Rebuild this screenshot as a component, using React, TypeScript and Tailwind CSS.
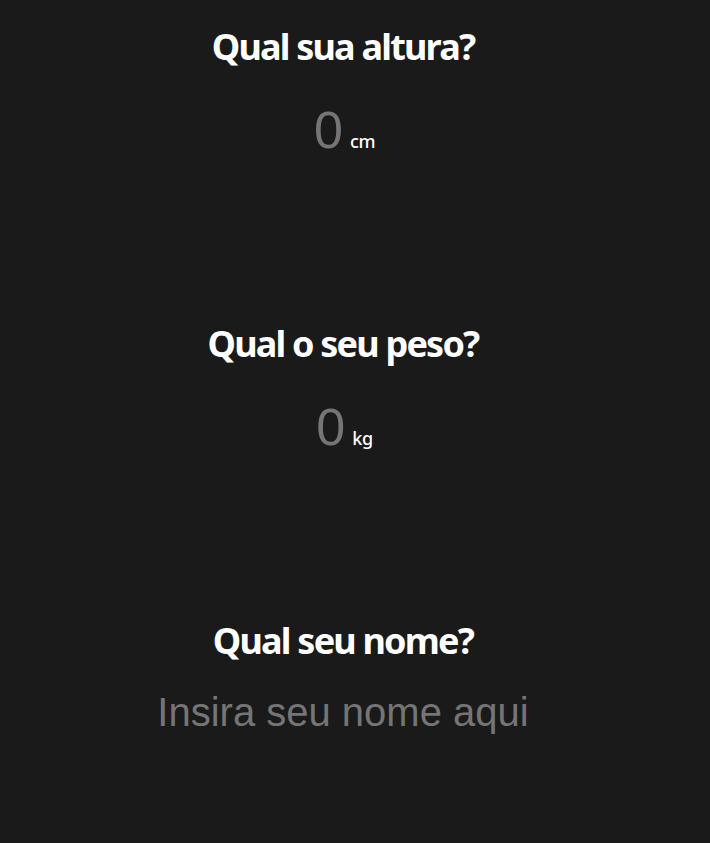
import { useState } from "react";

function NumberField({ unit }: { unit: string }) {
  const [value, setValue] = useState("");
  return (
    <div className="flex items-baseline justify-center">
      <input
        type="text"
        inputMode="numeric"
        value={value}
        onChange={(e) => setValue(e.target.value)}
        placeholder="0"
        className="w-[32px] bg-transparent text-right text-[52px] leading-none text-white outline-none placeholder:text-[#757575] font-['Liberation_Sans',Arial,sans-serif]"
      />
      <span className="ml-[7px] text-[18px] leading-none text-white font-['Noto_Sans',sans-serif] font-medium tracking-[-0.02em]">
        {unit}
      </span>
    </div>
  );
}

function Question({ title, children }: { title: string; children: React.ReactNode }) {
  return (
    <section className="flex flex-col items-center">
      <h2 className="text-[36px] font-bold leading-none tracking-[-0.05em] text-white font-['Noto_Sans',sans-serif]">
        {title}
      </h2>
      {children}
    </section>
  );
}

export default function App() {
  const [name, setName] = useState("");

  return (
    <div className="min-h-[843px] w-full bg-[#1a1a1a] pt-[29px] pr-[24px] flex flex-col items-center gap-[166px]">
      <Question title="Qual sua altura?">
        <div className="mt-[35px]">
          <NumberField unit="cm" />
        </div>
      </Question>
      <Question title="Qual o seu peso?">
        <div className="mt-[35px]">
          <NumberField unit="kg" />
        </div>
      </Question>
      <Question title="Qual seu nome?">
        <input
          type="text"
          value={name}
          onChange={(e) => setName(e.target.value)}
          placeholder="Insira seu nome aqui"
          className="mt-[31px] w-[420px] bg-transparent text-center text-[40px] leading-none text-white outline-none placeholder:text-[#757575] font-['Liberation_Sans',Arial,sans-serif]"
        />
      </Question>
    </div>
  );
}
